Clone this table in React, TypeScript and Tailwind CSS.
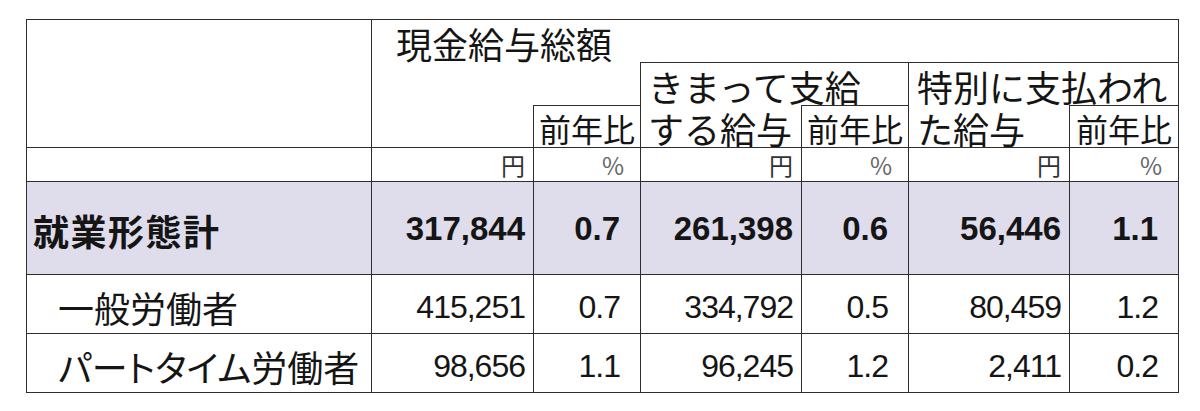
import React from "react";

const jp = "font-['Noto_Sans_CJK_JP','Noto_Sans_CJK_SC',sans-serif]";
const num = "font-['Liberation_Sans',Arial,sans-serif]";

type Row = {
  label: string;
  values: string[];
  bold?: boolean;
  indent?: boolean;
  palt?: boolean;
};

const rows: Row[] = [
  { label: "就業形態計", values: ["317,844", "0.7", "261,398", "0.6", "56,446", "1.1"], bold: true },
  { label: "一般労働者", values: ["415,251", "0.7", "334,792", "0.5", "80,459", "1.2"], indent: true },
  { label: "パートタイム労働者", values: ["98,656", "1.1", "96,245", "1.2", "2,411", "0.2"], indent: true, palt: true },
];

function Cell({ className = "", children }: { className?: string; children?: React.ReactNode }) {
  return <div className={`border-[#2e2e2e] flex ${className}`}>{children}</div>;
}

export default function App() {
  return (
    <div className="w-[1200px] h-[411px] bg-white overflow-hidden pt-[19px] pl-[26px]">
      <div className="grid w-fit grid-cols-[345px_162px_107px_161px_107px_161px_109px] grid-rows-[43px_43px_42px_34px_93px_59px_59px] border-r border-b border-[#2e2e2e] text-[#151515]">
        {/* header */}
        <Cell className="col-start-1 row-start-1 row-span-3 border-t border-l" />
        <Cell className={`col-start-2 col-span-6 row-start-1 border-t border-l items-center pl-[24px] pt-[4px] ${jp} text-[36px] leading-none`}>
          現金給与総額
        </Cell>
        <Cell className="col-start-2 col-span-2 row-start-2 border-l" />
        <Cell className="col-start-2 row-start-3 border-l" />
        <Cell className={`col-start-3 row-start-3 border-t border-l items-end justify-center pb-[3px] ${jp} text-[32px] leading-none`}>
          前年比
        </Cell>

        <Cell className={`col-start-4 col-span-2 row-start-2 border-t border-l items-end pl-[7px] pb-[1px] ${jp} text-[36px] leading-none whitespace-nowrap`}>
          きまって支給
        </Cell>
        <Cell className={`col-start-4 row-start-3 border-l items-end pl-[7px] pb-[1px] ${jp} text-[36px] leading-none whitespace-nowrap`}>
          する給与
        </Cell>
        <Cell className={`col-start-5 row-start-3 border-t border-l items-end justify-center pb-[3px] ${jp} text-[32px] leading-none`}>
          前年比
        </Cell>

        <Cell className={`col-start-6 col-span-2 row-start-2 border-t border-l items-end pl-[8px] pb-[1px] ${jp} text-[36px] leading-none whitespace-nowrap`}>
          特別に支払われ
        </Cell>
        <Cell className={`col-start-6 row-start-3 border-l items-end pl-[8px] pb-[1px] ${jp} text-[36px] leading-none whitespace-nowrap`}>
          た給与
        </Cell>
        <Cell className={`col-start-7 row-start-3 border-t border-l items-end justify-center pb-[3px] ${jp} text-[32px] leading-none`}>
          前年比
        </Cell>

        {/* units */}
        <Cell className="col-start-1 row-start-4 border-t border-l" />
        {["円", "%", "円", "%", "円", "%"].map((u, i) => (
          <Cell
            key={i}
            className={`row-start-4 border-t border-l items-center justify-end ${jp} text-[24px] leading-none ${
              u === "円" ? "pr-[8px] text-[#333]" : "pr-[16px] text-[#666]"
            }`}
          >
            {u}
          </Cell>
        ))}

        {/* body */}
        {rows.map((r, ri) => (
          <React.Fragment key={ri}>
            <Cell
              className={`col-start-1 border-t border-l items-center whitespace-nowrap ${jp} text-[36px] leading-none ${
                r.bold ? "bg-[#dfdcec] font-bold pl-[6px] pt-[3px] tracking-[1.5px]" : "pl-[31px] pt-[5px]"
              } ${r.palt ? "[font-feature-settings:'palt']" : ""}`}
            >
              {r.label}
            </Cell>
            {r.values.map((v, vi) => (
              <Cell
                key={vi}
                className={`border-t border-l items-center justify-end ${num} leading-none ${
                  r.bold ? "bg-[#dfdcec] font-bold text-[33px] pt-[1px]" : "text-[32px] tracking-[-1px] pt-[5px]"
                } ${vi % 2 === 0 ? "pr-[8px]" : "pr-[20px]"}`}
              >
                {v}
              </Cell>
            ))}
          </React.Fragment>
        ))}
      </div>
    </div>
  );
}
